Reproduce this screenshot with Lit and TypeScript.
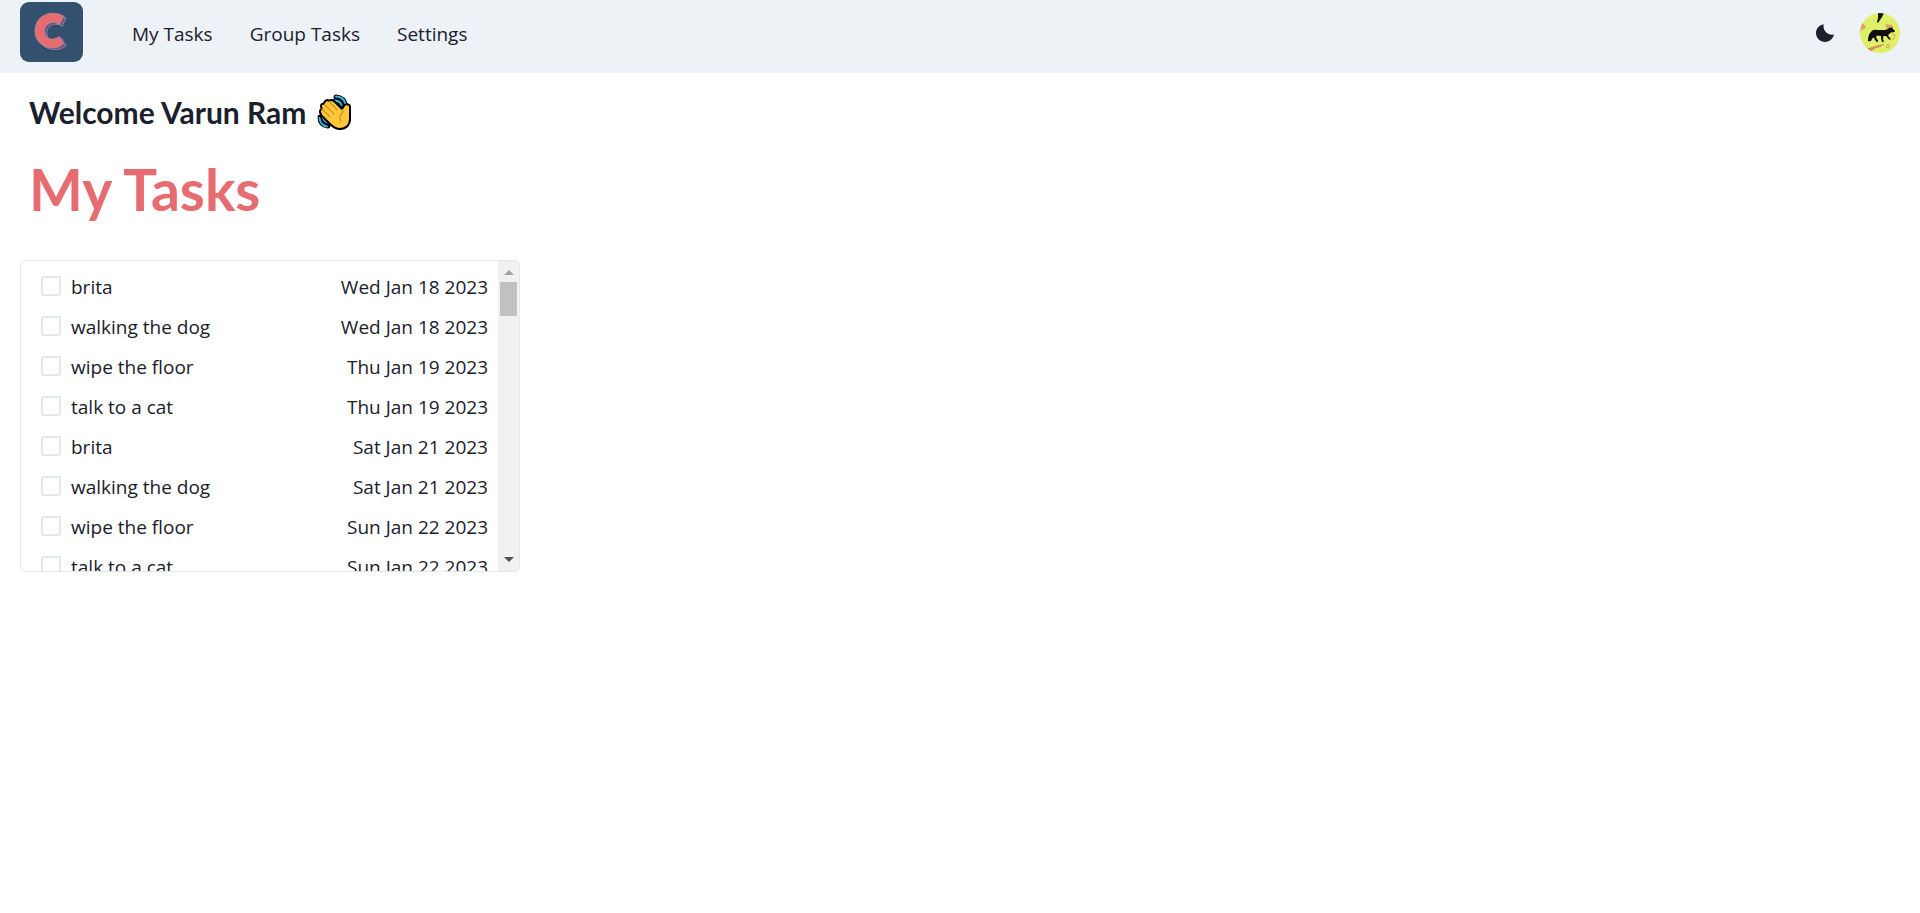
import { LitElement, html, css, svg } from "lit";
import { customElement, state } from "lit/decorators.js";

interface Task {
  name: string;
  due: string;
  done: boolean;
}

const task = (name: string, due: string): Task => ({ name, due, done: false });

const mark =
  "M43.500 14L39.500 22.500C36 20.500 33 19.500 30 21C25 23 23.500 27 24.500 31C25.500 35.500 29 37.500 33 37C35.500 36.700 37.500 35.800 39.500 34.500L43.500 42C39 45.500 34 46.500 29 45.500C20 44 15 37 15 29C15 19 22 12 31 11.300C36 11 40 12 43.500 14Z";

const logo = svg`
  <svg class="logo" viewBox="0 0 63 60" aria-hidden="true">
    <rect width="63" height="60" rx="9" fill="#34506f" />
    <path d=${mark} fill="#22354b" opacity=".6" transform="translate(2 3.500)" />
    <path d=${mark} fill="#6d5680" stroke="#a99ab4" stroke-width=".7" transform="translate(2.500 2)" />
    <path d=${mark} fill="#e66c70" stroke="#c9a0ae" stroke-width=".5" />
  </svg>`;

const moon = svg`
  <svg class="moon" viewBox="0 0 18 18" aria-hidden="true">
    <path fill="#1a202c" d="M7.700 .2C6.300 5.500 11 11.800 17.900 10.600C17 15 13.500 18 9.200 18C4.100 18 0 14 0 9C0 4.500 3.300 .9 7.700 .2Z" />
  </svg>`;

const avatar = svg`
  <svg class="avatar" viewBox="0 0 40 40" aria-hidden="true">
    <clipPath id="disc"><circle cx="20" cy="20" r="20" /></clipPath>
    <g clip-path="url(#disc)">
      <rect width="40" height="40" fill="#dff068" />
      <path fill="#dfa06a" d="M0 12L3 10L6 14L4 16L1 17L0 21ZM25 11L32 12L33 15L27 16Z" />
      <path fill="#cf8f58" d="M6 36L12 34L19 32L25 31L20 34L14 36L11 39L6 39Z" />
      <path fill="none" stroke="#dfa85a" stroke-width="1" d="M32 21L35 22L34 26L32 26M27 32L29 31L29 35L26 34Z" />
      <path fill="#17130d" d="M18 0H24L22 4L18 10L17 9L18 5Z" />
      <path fill="#100f0d" d="M11 19C12 17 14 16.500 17 17L25 17L28 16L29.500 14.500L31 15L32 14L33 16L35 18L34.500 19L31 19.500L29 21L28 22.500L30 25L31 26.500L29 26.500L26 23L23.500 23L23 26L24 28.500L22 29L21 25L21 23L17 22.500L16 24.500L18 27.500L18 29L16 28.500L14 25L13 24.500L12 26L11 28L9 28L10 23L11.500 20.500C10 23 10 25 10 28L8 28.500C8 25 8.500 21 11 19Z" />
    </g>
  </svg>`;

const wave = svg`
  <svg class="wave" viewBox="0 0 34 36" role="img" aria-label="Waving hand">
    <g fill="none" stroke-linecap="round">
      <path stroke="#000" stroke-width="5" d="M19 3Q27 3.500 28.500 12M18 7Q22 8 24 12M3 23Q3 31 11 32M6 23Q7 28 12 29" />
      <path stroke="#35b8e6" stroke-width="2" d="M19 2.500Q27 3 28.500 10M18 6.500Q23 7 24.500 11M2.500 24Q3 31 10 32.500M6 23.500Q7 27.500 11 28.500" />
    </g>
    <path fill="#ffc83d" stroke="#000" stroke-width="2" stroke-linejoin="round" d="M4 20C2 18 3 15 5 15C3 12 4 9 7 10C7 7 10 5 12 7C14 5 16 6 18 8L25 15L27 12C28 9 33 10 33 13L33 25C33 31 29 35 23 35C19 35 16 33 13 30L4 21Z" />
    <path fill="none" stroke="#d88f12" stroke-width="1.300" stroke-linecap="round" d="M5 15L13 23M7.500 10.500L17 20M12 7.500L20 15.500M25.500 15.500L26 18Q21 22 24 28" />
  </svg>`;

@customElement("app-root")
export class AppRoot extends LitElement {
  static styles = css`
    :host {
      display: block;
      min-height: 100vh;
      background: #fff;
      color: #1a202c;
      font: 19px/30px "Open Sans", "Noto Sans", sans-serif;
    }
    * { box-sizing: border-box; }
    h1, h2, ul { margin: 0; padding: 0; }
    .bar {
      display: flex;
      align-items: flex-start;
      height: 73px;
      padding: 2px 20px 0;
      background: #edf2f7;
    }
    .home, .links, .tools { display: flex; align-items: center; }
    .logo { display: block; width: 63px; height: 60px; }
    .links { gap: 37px; margin-left: 49px; padding-top: 17px; }
    .links a { color: inherit; text-decoration: none; white-space: nowrap; }
    .tools { margin-left: auto; gap: 8px; padding-top: 11px; }
    .tools button {
      display: grid;
      place-items: center;
      height: 40px;
      padding: 0;
      border: 0;
      background: none;
      cursor: pointer;
    }
    .theme { width: 54px; }
    .moon { width: 18px; height: 18px; }
    .avatar { display: block; width: 40px; height: 40px; }
    .titles { padding: 19px 29px 0; font-family: Lato, sans-serif; }
    .welcome {
      display: flex;
      align-items: center;
      gap: 11px;
      font-size: 30px;
      font-weight: 700;
      line-height: 40px;
    }
    .wave { width: 34px; height: 36px; }
    .title {
      margin-top: 22px;
      color: #e66c70;
      font-size: 57px;
      font-weight: 700;
      line-height: 70px;
    }
    .panel {
      display: flex;
      width: 500px;
      max-width: calc(100% - 40px);
      height: 312px;
      margin: 36px 20px 0;
      border: 1px solid #e2e8f0;
      border-radius: 5px;
      overflow: hidden;
    }
    .tasks {
      flex: 1;
      padding: 10px 10px 0 20px;
      list-style: none;
      overflow: hidden;
    }
    .task {
      display: flex;
      align-items: center;
      justify-content: space-between;
      height: 30px;
      margin-bottom: 10px;
    }
    .task label { display: flex; align-items: center; gap: 10px; }
    .task span, .task time { padding-top: 2px; }
    .task input {
      appearance: none;
      width: 20px;
      height: 20px;
      margin: 0;
      border: 2px solid #e2e8f0;
      border-radius: 2px;
    }
    .task input:checked { border-color: #3182ce; background: #3182ce; }
    .scroll {
      display: flex;
      flex-direction: column;
      align-items: center;
      justify-content: space-between;
      width: 21px;
      padding: 9px 0;
      background: #f1f1f1;
    }
    .top { display: grid; justify-items: center; gap: 7px; }
    .arrow { display: block; width: 10px; height: 5px; }
    .thumb { width: 17px; height: 34px; background: #c1c1c1; }
  `;

  @state() private tasks: Task[] = [
    task("brita", "Wed Jan 18 2023"),
    task("walking the dog", "Wed Jan 18 2023"),
    task("wipe the floor", "Thu Jan 19 2023"),
    task("talk to a cat", "Thu Jan 19 2023"),
    task("brita", "Sat Jan 21 2023"),
    task("walking the dog", "Sat Jan 21 2023"),
    task("wipe the floor", "Sun Jan 22 2023"),
    task("talk to a cat", "Sun Jan 22 2023"),
  ];

  private toggle(index: number) {
    this.tasks = this.tasks.map((t, i) => (i === index ? { ...t, done: !t.done } : t));
  }

  render() {
    return html`
      <header class="bar">
        <a class="home" href="#" aria-label="Home">${logo}</a>
        <nav class="links">
          <a href="#my-tasks">My Tasks</a>
          <a href="#group-tasks">Group Tasks</a>
          <a href="#settings">Settings</a>
        </nav>
        <div class="tools">
          <button class="theme" type="button" aria-label="Toggle dark mode">${moon}</button>
          <button type="button" aria-label="Account">${avatar}</button>
        </div>
      </header>
      <main>
        <div class="titles">
          <h2 class="welcome"><span>Welcome Varun Ram</span>${wave}</h2>
          <h1 class="title">My Tasks</h1>
        </div>
        <section class="panel" aria-label="Tasks">
          <ul class="tasks">
            ${this.tasks.map(
              (t, i) => html`
                <li class="task">
                  <label>
                    <input type="checkbox" .checked=${t.done} @change=${() => this.toggle(i)} />
                    <span>${t.name}</span>
                  </label>
                  <time>${t.due}</time>
                </li>
              `,
            )}
          </ul>
          <div class="scroll" aria-hidden="true">
            <div class="top">
              <svg class="arrow" viewBox="0 0 10 5"><path fill="#a3a3a3" d="M0 5L5 0L10 5Z" /></svg>
              <div class="thumb"></div>
            </div>
            <svg class="arrow" viewBox="0 0 10 5"><path fill="#505050" d="M0 0L5 5L10 0Z" /></svg>
          </div>
        </section>
      </main>
    `;
  }
}
